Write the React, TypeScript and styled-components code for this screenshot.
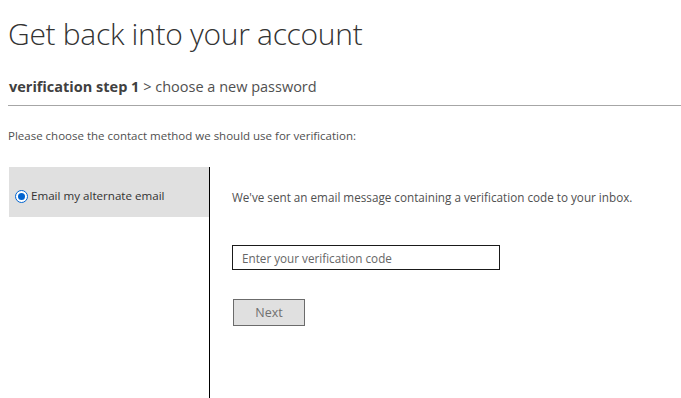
import React from 'react'
import styled, { createGlobalStyle } from 'styled-components'

const GlobalStyle = createGlobalStyle`
  body {
    margin: 0;
    background: #fff;
    font-family: "Open Sans", "Noto Sans", sans-serif;
  }
`

const Page = styled.div`
  padding-left: 8px;
  height: 398px;
  display: flex;
  flex-direction: column;
  overflow: hidden;
`
const Title = styled.h1`
  margin: 12px 0 0;
  font-size: 30px;
  font-weight: 300;
  line-height: 44px;
  color: #333;
  letter-spacing: -0.3px;
`
const Breadcrumb = styled.div`
  margin-top: 21px;
  padding-left: 1px;
  font-size: 14.5px;
  line-height: 20px;
  color: #505050;
  padding-bottom: 8px;
  border-bottom: 1px solid #a6a6a6;
`
const StepCurrent = styled.b`
  font-weight: 700;
  color: #404040;
`
const Prompt = styled.p`
  margin: 21px 0 0;
  font-size: 11.5px;
  line-height: 18px;
  color: #505050;
`
const Split = styled.div`
  margin-top: 22px;
  flex: 1;
  display: flex;
`
const Methods = styled.div`
  width: 200px;
  margin-left: 1px;
  border-right: 1px solid #000;
`
const MethodItem = styled.label<{ $active?: boolean }>`
  height: 50px;
  box-sizing: border-box;
  display: flex;
  align-items: flex-start;
  gap: 3px;
  padding: 20px 0 0 6px;
  background: ${(p) => (p.$active ? '#e0e0e0' : 'transparent')};
  font-size: 11.6px;
  line-height: 18px;
  color: #333;
`
const Radio = styled.span`
  margin-top: 3px;
  width: 11px;
  height: 11px;
  flex-shrink: 0;
  border-radius: 50%;
  border: 1px solid #0063d0;
  display: flex;
  align-items: center;
  justify-content: center;
  background: #fff;
  &::after {
    content: '';
    width: 7px;
    height: 7px;
    border-radius: 50%;
    background: #0063d0;
  }
`
const Detail = styled.div`
  padding-left: 22px;
  display: flex;
  flex-direction: column;
  align-items: flex-start;
`
const Info = styled.p`
  margin: 21px 0 0;
  font-size: 11.7px;
  line-height: 18px;
  color: #505050;
`
const CodeInput = styled.input`
  margin-top: 39px;
  width: 268px;
  height: 25px;
  box-sizing: border-box;
  border: 1px solid #1a1a1a;
  padding: 0 9px;
  font-family: inherit;
  font-size: 11.7px;
  color: #333;
  outline: none;
  &::placeholder {
    color: #666;
  }
`
const NextButton = styled.button`
  margin-top: 29px;
  margin-left: 1px;
  width: 72px;
  height: 27px;
  box-sizing: border-box;
  background: #e0e0e0;
  border: 1px solid #6b6b6b;
  font-family: inherit;
  font-size: 12.5px;
  color: #707070;
  padding: 0;
`

export default function App() {
  return (
    <>
      <GlobalStyle />
      <Page>
        <Title>Get back into your account</Title>
        <Breadcrumb>
          <StepCurrent>verification step 1</StepCurrent> &gt; choose a new password
        </Breadcrumb>
        <Prompt>Please choose the contact method we should use for verification:</Prompt>
        <Split>
          <Methods>
            <MethodItem $active>
              <Radio />
              Email my alternate email
            </MethodItem>
          </Methods>
          <Detail>
            <Info>We&apos;ve sent an email message containing a verification code to your inbox.</Info>
            <CodeInput placeholder="Enter your verification code" />
            <NextButton>Next</NextButton>
          </Detail>
        </Split>
      </Page>
    </>
  )
}
